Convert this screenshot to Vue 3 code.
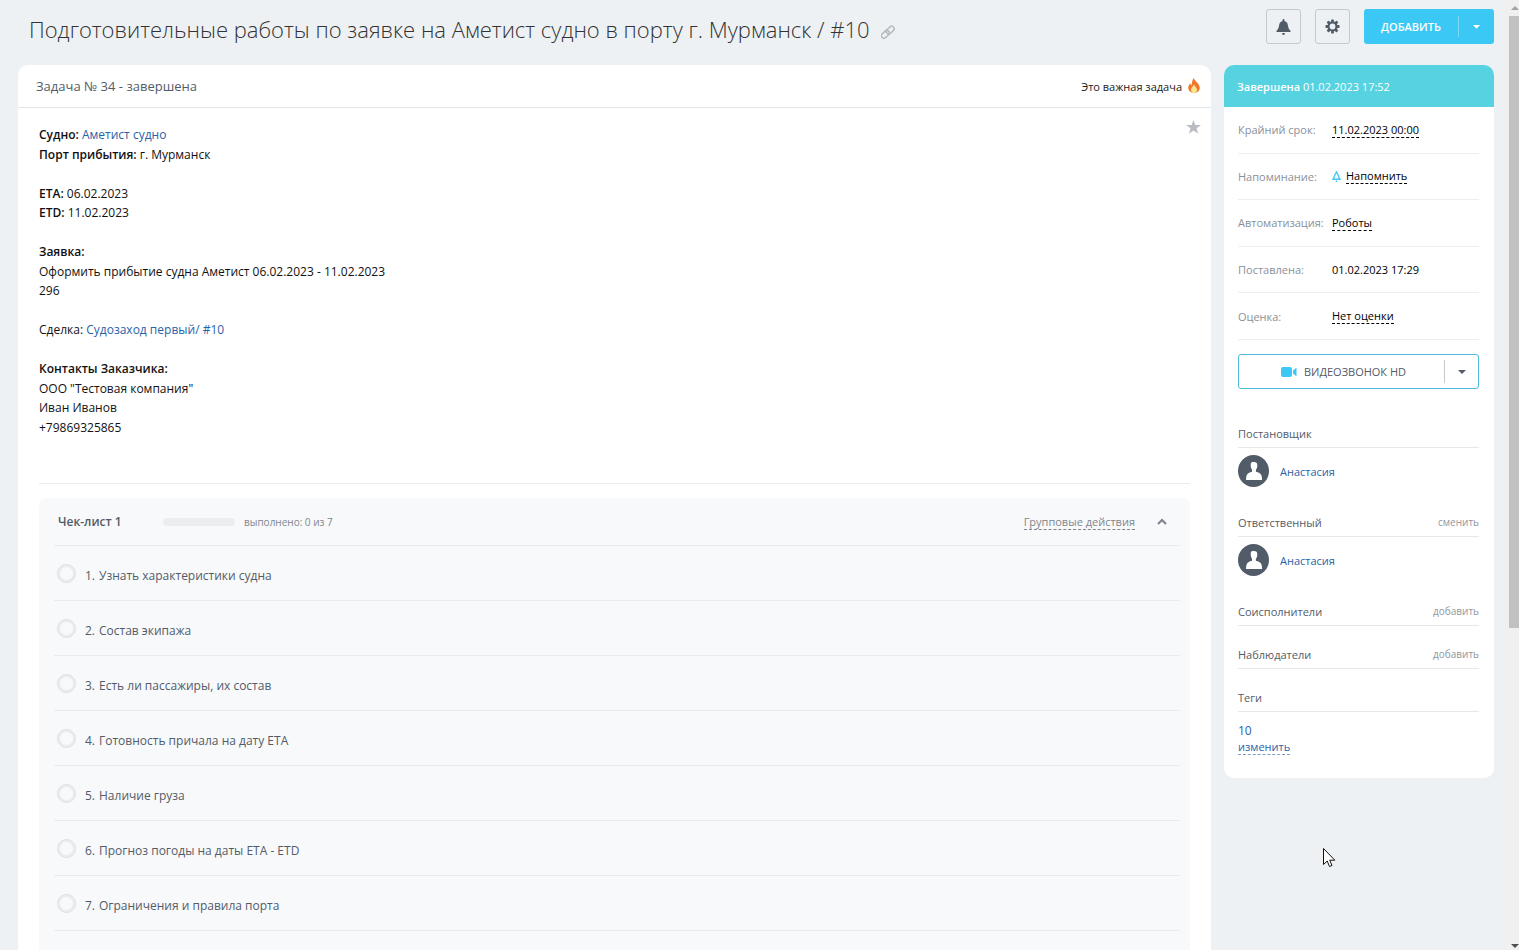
<script setup>
import { ref } from 'vue'

const checklist = ref([
  'Узнать характеристики судна',
  'Состав экипажа',
  'Есть ли пассажиры, их состав',
  'Готовность причала на дату ETA',
  'Наличие груза',
  'Прогноз погоды на даты ETA - ETD',
  'Ограничения и правила порта',
].map((text) => ({ text, done: false })))

const people = [
  { role: 'Постановщик', name: 'Анастасия' },
  { role: 'Ответственный', name: 'Анастасия', action: 'сменить' },
  { role: 'Соисполнители', action: 'добавить' },
  { role: 'Наблюдатели', action: 'добавить' },
]
</script>

<template>
  <div class="app">
    <div class="page">
      <header class="top">
        <h1>Подготовительные работы по заявке на Аметист судно в порту г. Мурманск / #10</h1>
        <a href="#" class="permalink" aria-label="Скопировать ссылку">
          <svg width="14" height="14" viewBox="0 0 14 14" fill="none" stroke="#b4b9bf" stroke-width="1.5" stroke-linecap="round">
            <g transform="rotate(-45 7 7)">
              <rect x="-1" y="4.300" width="9" height="5" rx="2.500" />
              <rect x="5.400" y="4.700" width="9" height="5" rx="2.500" />
            </g>
          </svg>
        </a>
        <div class="actions">
          <button class="square" aria-label="Уведомления">
            <svg width="15" height="16" viewBox="0 0 15 16" fill="#525c69">
              <path d="M7.500 0a1 1 0 0 1 1 1v.9c2.200.6 3.100 2.200 3.400 4.300.4 2.600 1 4 2.600 5.600V13H.5V11.800C2.100 10.200 2.700 8.800 3.100 6.200 3.400 4.100 4.300 2.500 6.500 1.900V1a1 1 0 0 1 1-1z" />
              <path d="M6.200 14h2.600v.8a1.300 1.200 0 0 1-2.600 0z" />
            </svg>
          </button>
          <button class="square" aria-label="Настройки">
            <svg width="15" height="15" viewBox="0 0 16 16">
              <g fill="#525c69">
                <rect x="6.500" y="0.500" width="3" height="15" rx=".8" />
                <rect x="6.500" y="0.500" width="3" height="15" rx=".8" transform="rotate(45 8 8)" />
                <rect x="6.500" y="0.500" width="3" height="15" rx=".8" transform="rotate(90 8 8)" />
                <rect x="6.500" y="0.500" width="3" height="15" rx=".8" transform="rotate(135 8 8)" />
                <circle cx="8" cy="8" r="5.400" />
              </g>
              <circle cx="8" cy="8" r="3.100" fill="#edf1f5" />
            </svg>
          </button>
          <div class="add">
            <button class="add-main">ДОБАВИТЬ</button>
            <button class="add-more" aria-label="Ещё">
              <svg width="7" height="4" viewBox="0 0 7 4"><path d="M0 0h7L3.500 3.800z" fill="#fff" /></svg>
            </button>
          </div>
        </div>
      </header>

      <div class="columns">
        <main class="task">
          <div class="task-head">
            <h2>Задача № 34 - завершена</h2>
            <span class="important">Это важная задача
              <svg width="12" height="16" viewBox="0 0 12 16">
                <path d="M5.800 0C6.600 3.200 11.800 5.500 11.800 10.200A5.900 5.600 0 0 1 .2 10.200C.2 8 1.200 6.200 2.300 5.200 2.400 6.200 2.700 6.800 3.400 7.200 4.300 5 3.800 2.200 5.800 0z" fill="#f0772b" />
                <path d="M6 6.200C6.500 8.300 9 9.300 9 11.700A3 3.100 0 0 1 3 11.700C3 9.300 5.300 8.500 6 6.200z" fill="#fce58f" />
              </svg>
            </span>
          </div>

          <div class="description">
            <button class="star" aria-label="В избранное">
              <svg width="15" height="14" viewBox="0 0 15 14"><path d="M7.500 0l1.800 5H15l-4.500 3.300 1.700 5.400-4.700-3.300-4.700 3.300 1.700-5.400L0 5h5.700z" fill="#b9bcc3" /></svg>
            </button>
            <p><b>Судно:</b> <a href="#">Аметист судно</a><br><b>Порт прибытия:</b> г. Мурманск</p>
            <p><b>ETA:</b> 06.02.2023<br><b>ETD:</b> 11.02.2023</p>
            <p><b>Заявка:</b><br>Оформить прибытие судна Аметист 06.02.2023 - 11.02.2023<br>296</p>
            <p>Сделка: <a href="#">Судозаход первый/ #10</a></p>
            <p><b>Контакты Заказчика:</b><br>ООО "Тестовая компания"<br>Иван Иванов<br>+79869325865</p>
          </div>

          <section class="checklist">
            <div class="check-head">
              <h3>Чек-лист 1</h3>
              <span class="bar"></span>
              <span class="count">выполнено: 0 из 7</span>
              <button class="group">Групповые действия</button>
              <button class="collapse" aria-label="Свернуть">
                <svg width="10" height="7" viewBox="0 0 10 7" fill="none" stroke="#80868e" stroke-width="2.200"><path d="M1 6l4-4 4 4" /></svg>
              </button>
            </div>
            <label v-for="(item, i) in checklist" :key="i" class="check-row">
              <input v-model="item.done" type="checkbox">
              <span class="num">{{ i + 1 }}.</span>
              <span>{{ item.text }}</span>
            </label>
          </section>
        </main>

        <aside class="side">
          <div class="side-head"><b>Завершена</b> 01.02.2023 17:52</div>
          <div class="side-body">
            <dl>
              <div><dt>Крайний срок:</dt><dd><button class="dashed strong">11.02.2023 00:00</button></dd></div>
              <div>
                <dt>Напоминание:</dt>
                <dd>
                  <svg width="9" height="11" viewBox="0 0 9 11"><path d="M4.500 1.700C2.400 2.200 3.200 5.500 1 8.300h7C5.800 5.500 6.600 2.200 4.500 1.700zM4.500 0v1.500M4.500 9.400V11" fill="none" stroke="#47c8f2" stroke-width="1.400" /></svg>
                  <button class="dashed">Напомнить</button>
                </dd>
              </div>
              <div><dt>Автоматизация:</dt><dd><button class="dashed">Роботы</button></dd></div>
              <div><dt>Поставлена:</dt><dd>01.02.2023 17:29</dd></div>
              <div><dt>Оценка:</dt><dd><button class="dashed">Нет оценки</button></dd></div>
            </dl>

            <div class="video">
              <button class="video-main">
                <svg width="16" height="10" viewBox="0 0 16 10" fill="#3bc8f5"><rect width="11" height="10" rx="2" /><path d="M12 3.500l3-2.500h.5v8H15l-3-2.500z" /></svg>
                ВИДЕОЗВОНОК HD
              </button>
              <button class="video-more" aria-label="Варианты звонка">
                <svg width="8" height="4" viewBox="0 0 8 4"><path d="M0 0h8L4 4z" fill="#525c69" /></svg>
              </button>
            </div>

            <div class="groups">
              <section v-for="p in people" :key="p.role">
                <div class="group-head"><h4>{{ p.role }}</h4><button v-if="p.action">{{ p.action }}</button></div>
                <div v-if="p.name" class="person">
                  <svg width="31" height="32" viewBox="0 0 31 32">
                    <ellipse cx="15.500" cy="16" rx="15.500" ry="16" fill="#525c69" />
                    <path d="M12.700 9.800c0-2.600 1-2.700 2.600-2.800 2.800-.2 4 .9 4 3.200 0 2.200-.6 3.600-1.400 4.500v2.100c2.600.8 4.800 1.600 5.400 3.200.5 1.300.8 3 .8 5H8c0-2 .3-3.700.8-5 .6-1.600 2.800-2.400 5.200-3.200v-2.100c-.8-.9-1.300-2.500-1.300-4.900z" fill="#fff" />
                  </svg>
                  <a href="#">{{ p.name }}</a>
                </div>
              </section>
              <section>
                <div class="group-head"><h4>Теги</h4></div>
                <div class="tags">
                  <a href="#">10</a>
                  <button>изменить</button>
                </div>
              </section>
            </div>
          </div>
        </aside>
      </div>
    </div>

    <div class="scroll" aria-hidden="true">
      <svg width="8" height="4" viewBox="0 0 8 4"><path d="M4 0l4 4H0z" fill="#a3a3a3" /></svg>
      <div class="thumb"></div>
      <svg class="down" width="8" height="4" viewBox="0 0 8 4"><path d="M0 0h8L4 4z" fill="#505050" /></svg>
    </div>

    <svg class="cursor" width="13" height="20" viewBox="0 0 13 20"><path d="M.5.500v16l3.700-3.500 2.300 5.500 2.500-1-2.300-5.300H11.800z" fill="#fff" stroke="#111" /></svg>
  </div>
</template>

<style>
body { background: #edf1f4; }
</style>

<style scoped>
* { box-sizing: border-box; }
.app {
  position: relative;
  display: flex;
  height: 100vh;
  overflow: hidden;
  background: #edf1f4;
  color: #000;
  font-family: "Open Sans", "Noto Sans", sans-serif;
  font-size: 11px;
}
h1, h2, h3, h4, p, dl, dd { margin: 0; font-weight: 400; }
b { font-weight: 600; }
a { color: #2a62a8; text-decoration: none; }
button { padding: 0; border: 0; background: none; font: inherit; color: inherit; cursor: pointer; }
svg { display: block; flex: none; }

.page { flex: 1; min-width: 0; display: flex; flex-direction: column; padding: 0 11px 0 18px; }
.top { display: flex; align-items: center; height: 65px; padding: 0 0 12px 11px; flex: none; }
h1 { font-size: 22px; font-weight: 300; line-height: 32px; color: #333; white-space: nowrap; padding-top: 5px; }
.permalink { margin-left: 11px; padding-top: 10px; }
.actions { display: flex; gap: 14px; margin-left: auto; }
.square { display: grid; place-items: center; width: 35px; height: 35px; border: 1px solid #c3c9cf; border-radius: 3px; }
.add { display: flex; align-items: center; width: 130px; height: 35px; border-radius: 3px; background: #3bc8f5; color: #fff; }
.add-main { flex: 1; height: 21px; font-weight: 600; border-right: 1px solid #7cdaf8; }
.add-more { display: grid; place-items: center; width: 35px; height: 21px; }

.columns { flex: 1; min-height: 0; display: flex; align-items: flex-start; gap: 13px; }
.task { flex: 1; align-self: stretch; min-width: 0; display: flex; flex-direction: column; background: #fff; border-radius: 10px 10px 0 0; }
.task-head { display: flex; flex: none; align-items: center; justify-content: space-between; height: 43px; padding: 0 11px 0 18px; border-bottom: 1px solid #e4e7ea; }
h2 { font-size: 13px; color: #525c69; }
.important { display: flex; align-items: center; gap: 6px; color: #222; }
.description { position: relative; flex: none; margin: 0 21px; padding: 17px 0 46px; border-bottom: 1px solid #e9ebed; font-size: 12px; line-height: 1.625; color: #111; }
.description p + p { margin-top: 1.625em; }
.star { position: absolute; top: 12px; right: -11px; }

.checklist { flex: 1; margin: 14px 21px 0; padding: 0 10px 0 15px; background: #f8f9fb; border-radius: 8px 8px 0 0; color: #525c69; }
.check-head { display: flex; align-items: center; height: 48px; padding: 0 13px 0 4px; border-bottom: 1px solid #e9ebee; }
h3 { width: 105px; font-size: 12px; font-weight: 600; }
.bar { width: 72px; height: 8px; border-radius: 4px; background: #ebedef; }
.count { margin-left: 9px; font-size: 10px; color: #80868e; }
.group { margin-left: auto; line-height: 15px; border-bottom: 1px dashed #80868e; color: #80868e; }
.collapse { margin-left: 22px; }
.check-row { display: flex; align-items: center; height: 55px; border-bottom: 1px solid #e9ebee; font-size: 12px; padding-left: 3px; }
.check-row input { appearance: none; width: 19px; height: 19px; margin: 0 9px 0 0; border: 1px solid #dcdee0; border-radius: 50%; background: #f8f9fb; box-shadow: inset 0 0 0 2px #ebecee; }
.check-row input:checked { background: #3bc8f5; }
.check-row span { padding-top: 4px; }
.check-row .num { width: 14px; }

.side { width: 270px; flex: none; border-radius: 10px; background: #fff; overflow: hidden; }
.side-head { height: 42px; padding-left: 13px; line-height: 43px; background: #57d2e0; color: #fff; }
.side-body { padding: 0 15px 23px 14px; }
dl { display: flex; flex-direction: column; height: 233px; }
dl > div { flex: 1; display: flex; align-items: center; border-bottom: 1px solid #eceef0; }
dt { width: 94px; color: #8a9099; }
dd { display: flex; align-items: center; gap: 5px; }
.dashed { line-height: 15px; border-bottom: 1px dashed #000; }
.strong { font-weight: 500; }
.video { display: flex; align-items: center; height: 35px; margin-top: 14px; border: 1px solid #4fb9de; border-radius: 3px; color: #525c69; }
.video-main { flex: 1; display: flex; align-items: center; justify-content: center; gap: 7px; height: 23px; padding-left: 4px; border-right: 1px solid #c6cacf; }
.video-more { display: grid; place-items: center; width: 33px; height: 23px; }
.groups { display: flex; flex-direction: column; gap: 14px; margin-top: 30px; }
.group-head { display: flex; align-items: center; justify-content: space-between; height: 29px; border-bottom: 1px solid #e6e8eb; }
h4 { font-size: 11px; color: #525c69; }
.group-head button { font-size: 10px; color: #9096a0; }
.person { display: flex; align-items: center; gap: 11px; height: 46px; }
.tags { display: flex; flex-direction: column; align-items: flex-start; padding-top: 11px; color: #2a62a8; line-height: 16px; }
.tags a { font-size: 12px; }
.tags button { line-height: 15px; border-bottom: 1px dashed #7d9cc4; }

.scroll { display: flex; flex-direction: column; align-items: flex-end; width: 14px; padding: 6px 0 2px; background: #f0f0f0; }
.thumb { width: 10px; height: 65%; margin-top: 6px; background: #c1c1c1; }
.down { margin-top: auto; }
.cursor { position: absolute; left: 1323px; top: 848px; }
</style>
